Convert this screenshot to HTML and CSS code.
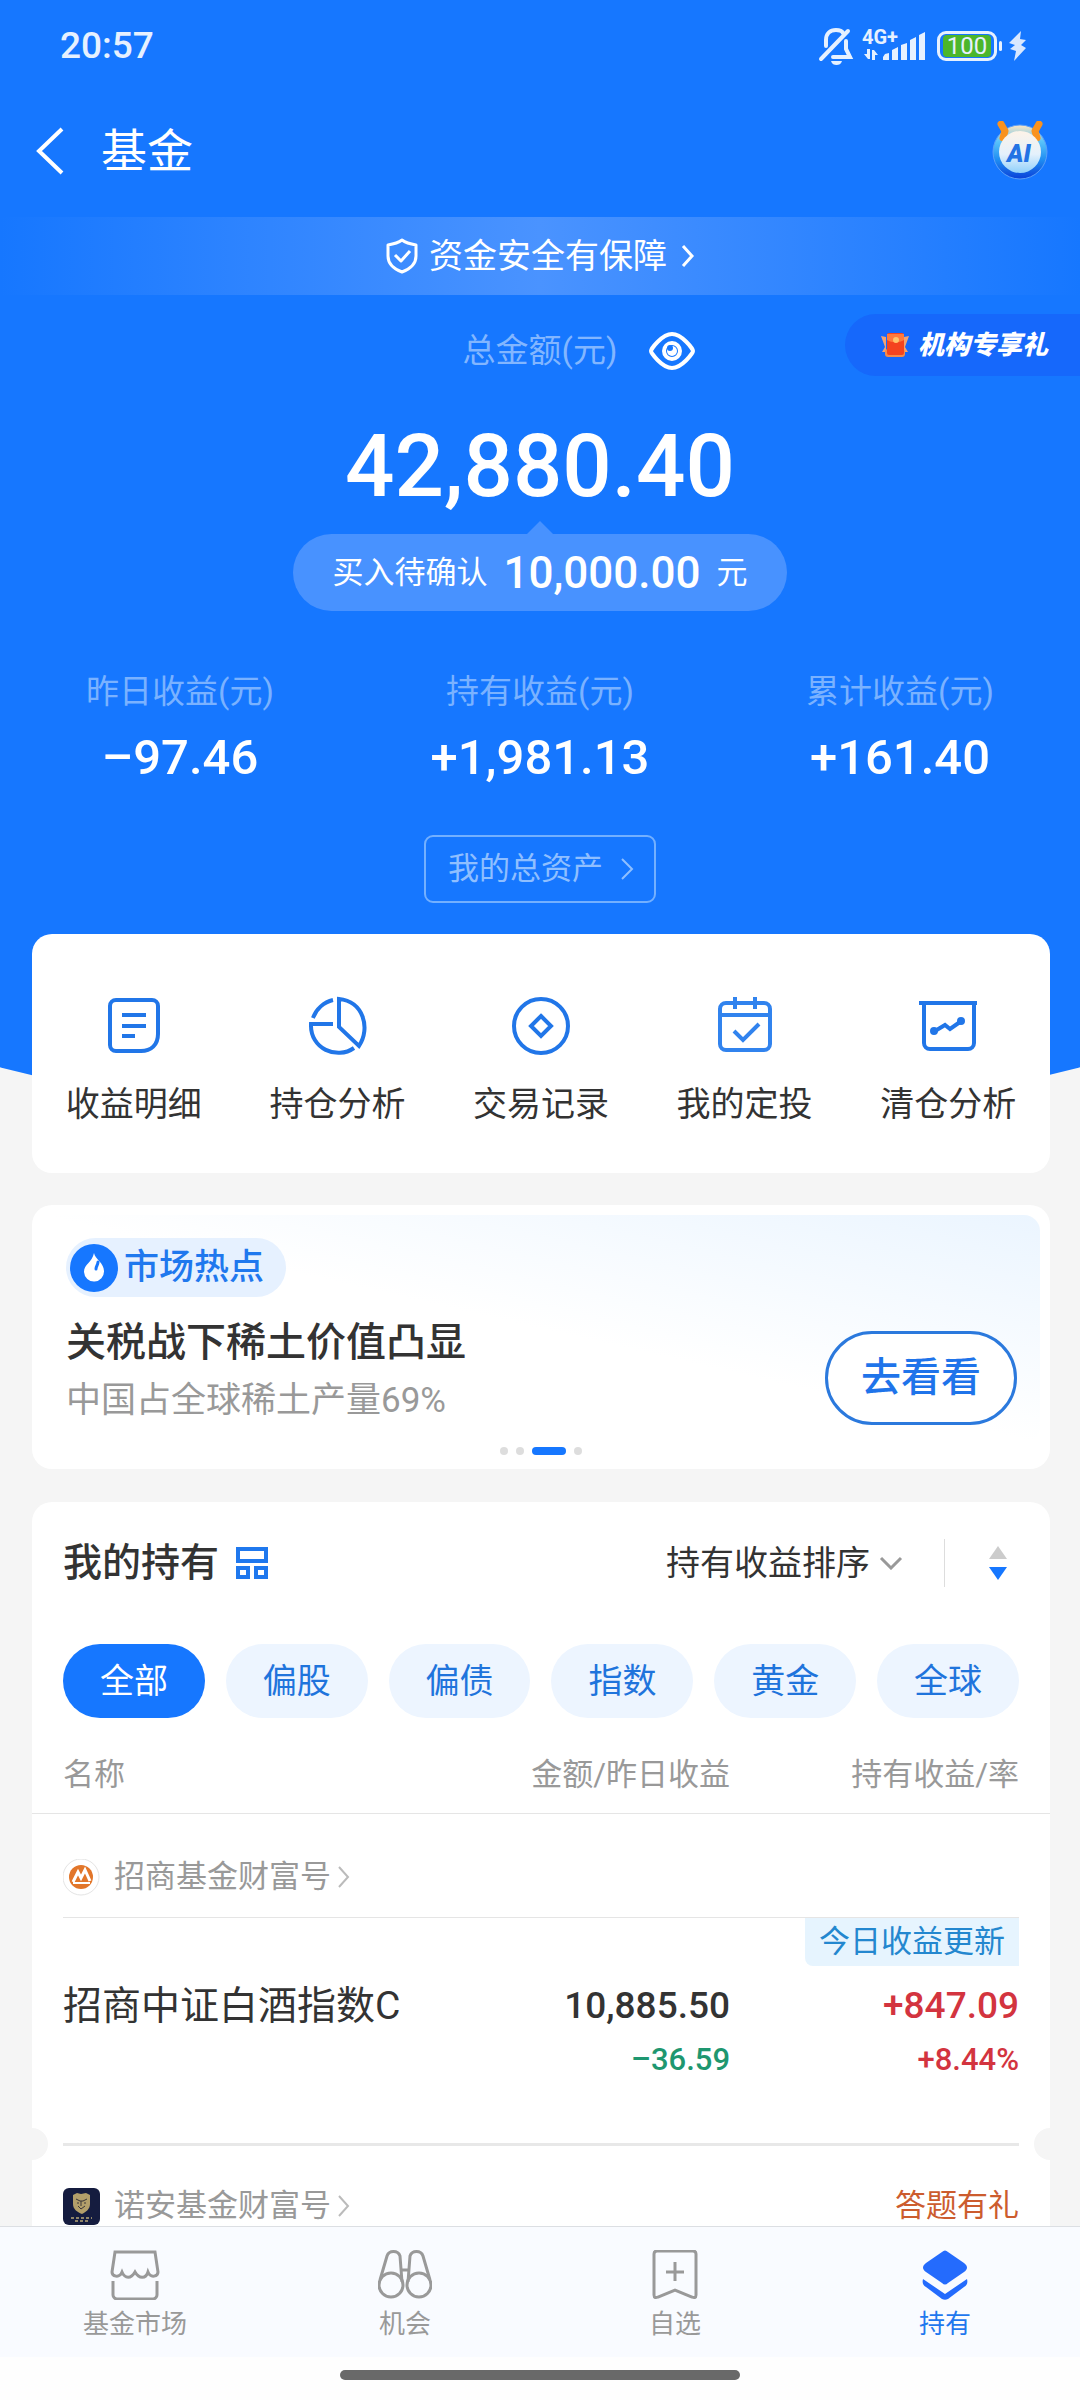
FILE: index.html
```html
<!DOCTYPE html>
<html lang="zh-CN">
<head>
<meta charset="utf-8">
<meta name="viewport" content="width=device-width, initial-scale=1">
<title>基金</title>
<link rel="stylesheet" href="styles.css">
</head>
<body>
<div class="app">
  <header class="hero">
    <div class="status">
      <span class="status-time">20:57</span>
      <div class="status-icons">
        <svg class="ic-bell" width="36" height="40" viewBox="0 0 36 40" fill="none" stroke="#e6f1ff" stroke-width="4" stroke-linecap="round">
          <path d="M8 20V14C8 8 12 4 18 4c3 0 6 1 7 3M28 15v8l4 8H15M3 33 30 5"/>
          <path d="M13 35h11c-1 3-3 4-5.500 4S14 38 13 35z" fill="#e6f1ff" stroke="none"/>
        </svg>
        <svg class="ic-signal" width="66" height="40" viewBox="0 0 66 40" fill="#e6f1ff">
          <text x="1" y="18" class="net">4G+</text>
          <path d="M24 28l4-1v7h-6v-3zM31 24l6-3v13h-6zM40 19l6-2v17h-6zM49 14l6-3v23h-6zM58 9l6-3v28h-6z"/>
          <path d="M9 23v10h-2l-4-5h3v-5zM11 34V24h2l4 5h-3v5z"/>
        </svg>
        <span class="battery"><span class="battery-level">100</span></span>
        <svg width="18" height="30" viewBox="0 0 18 30" fill="#d9e8ff"><path d="M12 0 0 12l6 2-5 4 6 2-2 10L17 17l-5-3 5-5-6-1z"/></svg>
      </div>
    </div>

    <div class="titlebar">
      <button class="plain back" aria-label="返回">
        <svg width="28" height="48" viewBox="0 0 28 48" fill="none" stroke="#fff" stroke-width="4"><path d="M26 2 3 24l23 22"/></svg>
      </button>
      <h1>基金</h1>
      <button class="plain assistant" aria-label="AI 助手">
        <svg width="56" height="60" viewBox="0 0 56 60">
          <defs>
            <linearGradient id="ring" x1="0" y1="0" x2="0" y2="1"><stop offset="0" stop-color="#ffe6c2"/><stop offset=".3" stop-color="#5ac4fa"/><stop offset=".65" stop-color="#1e8cf2"/><stop offset="1" stop-color="#0a40d8"/></linearGradient>
            <linearGradient id="face" x1="0" y1="0" x2="0" y2="1"><stop offset="0" stop-color="#fdf3e8"/><stop offset=".55" stop-color="#e4f1fc"/><stop offset="1" stop-color="#8fd0fb"/></linearGradient>
          </defs>
          <circle cx="28" cy="31" r="27" fill="url(#ring)" stroke="#5b9ff8" stroke-width="1"/>
          <path d="M9 3l4 7-2 7M47 3l-4 7 2 7" fill="none" stroke="#f9921e" stroke-width="7" stroke-linecap="round" stroke-linejoin="round"/>
          <circle cx="28" cy="31" r="21" fill="url(#face)"/>
          <text x="27" y="41" text-anchor="middle" class="ai">AI</text>
        </svg>
      </button>
    </div>

    <a class="safe" href="#safe">
      <svg width="34" height="36" viewBox="0 0 34 36" fill="none" stroke="#fff" stroke-width="3" stroke-linejoin="round"><path d="M17 2c4 3 8 4 14 5v11c0 8-6 13-14 16C9 31 3 26 3 18V7c6-1 10-2 14-5z"/><path d="M10 17l6 6 9-10"/></svg>
      <span>资金安全有保障</span>
      <svg width="14" height="24" viewBox="0 0 14 24" fill="none" stroke="#fff" stroke-width="3"><path d="M2 2l9 10-9 10"/></svg>
    </a>

    <div class="total-label">
      <span class="total-text">总金额(元)</span>
      <button class="plain eye" aria-label="隐藏金额">
        <svg width="48" height="38" viewBox="0 0 48 38" fill="none" stroke="#fff" stroke-width="4"><path d="M3 19C3 17 14 2 24 2s21 15 21 17-11 17-21 17S3 21 3 19z"/><circle cx="24" cy="19" r="8"/><circle cx="24" cy="19" r="5" fill="#fff" stroke="none"/><circle cx="22" cy="16" r="3" fill="#1677ff" stroke="none"/></svg>
      </button>
      <a class="gift" href="#gift">
        <svg width="32" height="26" viewBox="0 0 32 26"><path d="M2 4l5 1v15H3l3-5zM30 4l-5 1v15h4l-3-5z" fill="#f3a272"/><rect x="6" y="17" width="20" height="8" rx="3" fill="#f58a4b"/><rect x="8" y="1" width="17" height="22" rx="2" fill="#f4431f"/><path d="M8 2h17v6c-5 3-12 3-17 0z" fill="#ff7a3c"/><circle cx="17" cy="8" r="3" fill="#ffc36b"/></svg>
        <span>机构专享礼</span>
      </a>
    </div>

    <div class="amount">42,880.40</div>
    <a class="pending" href="#pending"><span>买入待确认</span><strong>10,000.00</strong><span>元</span></a>

    <dl class="stats">
      <div><dt>昨日收益(元)</dt><dd>–97.46</dd></div>
      <div><dt>持有收益(元)</dt><dd>+1,981.13</dd></div>
      <div><dt>累计收益(元)</dt><dd>+161.40</dd></div>
    </dl>

    <button class="assets">我的总资产
      <svg width="14" height="24" viewBox="0 0 14 24" fill="none" stroke="#8fbfff" stroke-width="2"><path d="M2 2l10 10L2 22"/></svg>
    </button>
  </header>

  <main>
    <nav class="card shortcuts" aria-label="快捷入口">
      <a href="#detail"><svg class="ic" viewBox="0 0 60 60"><path d="M12 4h36a6 6 0 0 1 6 6v28c0 11-7 17-17 17H12a6 6 0 0 1-6-6V10a6 6 0 0 1 6-6z"/><path d="M18 19h24M18 30h24M18 40h13"/></svg>收益明细</a>
      <a href="#position"><svg class="ic" viewBox="0 0 60 60"><path d="M32 3v28l20 19C64 32 56 5 32 3zM26 4C17 6 9 13 6 22M26 28H4c-1 25 26 36 43 24"/></svg>持仓分析</a>
      <a href="#trade"><svg class="ic" viewBox="0 0 60 60"><circle cx="30" cy="30" r="27"/><path d="M30 20l10 10-10 10-10-10z"/></svg>交易记录</a>
      <a href="#plan"><svg class="ic ic-light" viewBox="0 0 60 60"><rect x="5" y="7" width="50" height="47" rx="6"/><path d="M5 19h50M20 1v12M40 1v12M19 35l9 9 16-16"/></svg>我的定投</a>
      <a href="#cleared"><svg class="ic" viewBox="0 0 60 60"><path d="M1 7h58M6 7v40a6 6 0 0 0 6 6h38a6 6 0 0 0 6-6V7M17 35l10-6 5 4 10-7"/><circle cx="16" cy="35" r="2"/><circle cx="43" cy="25" r="2"/></svg>清仓分析</a>
    </nav>

    <section class="card hot">
      <div class="hot-inner">
        <div class="hot-text">
          <span class="hot-tag">
            <svg width="48" height="48" viewBox="0 0 48 48"><circle cx="24" cy="24" r="24" fill="#1677ff"/><path d="M24 9c1 6 10 10 10 18a10 10 0 0 1-20 1c0-8 8-9 10-19z" fill="#fff"/><path d="M28 18c0 3-2 4-2 7" fill="none" stroke="#1677ff" stroke-width="3" stroke-linecap="round"/></svg>
            市场热点
          </span>
          <h2>关税战下稀土价值凸显</h2>
          <p>中国占全球稀土产量69%</p>
        </div>
        <button class="go">去看看</button>
      </div>
      <div class="dots"><i></i><i></i><i class="on"></i><i></i></div>
    </section>

    <section class="card holdings">
      <div class="holdings-head">
        <h2>我的持有</h2>
        <button class="plain layout" aria-label="切换布局">
          <svg width="34" height="34" viewBox="0 0 34 34" fill="none" stroke="#1f78ee" stroke-width="4"><rect x="3" y="3" width="28" height="12"/><rect x="3" y="22" width="10" height="9"/><rect x="21" y="22" width="10" height="9"/></svg>
        </button>
        <label class="sort">
          <select aria-label="排序方式"><option>持有收益排序</option><option>昨日收益排序</option></select>
          <svg width="24" height="14" viewBox="0 0 24 14" fill="none" stroke="#999" stroke-width="3"><path d="M2 2l10 10L22 2"/></svg>
        </label>
        <button class="plain order" aria-label="切换升降序">
          <svg width="20" height="34" viewBox="0 0 20 34"><path d="M10 0l9 13H1z" fill="#ccc"/><path d="M10 34l9-13H1z" fill="#1677ff"/></svg>
        </button>
      </div>

      <div class="tabs">
        <button class="on">全部</button><button>偏股</button><button>偏债</button><button>指数</button><button>黄金</button><button>全球</button>
      </div>

      <table>
        <colgroup><col><col class="col-amount"><col class="col-profit"></colgroup>
        <thead><tr><th>名称</th><th>金额/昨日收益</th><th>持有收益/率</th></tr></thead>
        <tbody>
          <tr><td colspan="3"><div class="group lined">
            <svg width="37" height="37" viewBox="0 0 37 37"><circle cx="18" cy="18" r="18" fill="#fff" stroke="#e4e4e4"/><circle cx="18" cy="18" r="12" fill="#e2762a"/><path d="M10 23l5-10 3 6 4-8 5 11" fill="none" stroke="#fff" stroke-width="3"/><path d="M10 24h17" stroke="#fff" stroke-width="2"/></svg>
            <a href="#cmf">招商基金财富号</a>
            <svg width="14" height="24" viewBox="0 0 14 24" fill="none" stroke="#bbb" stroke-width="2"><path d="M2 2l9 10-9 10"/></svg>
          </div></td></tr>
          <tr class="fund">
            <td><span class="name">招商中证白酒指数C</span></td>
            <td><span class="value">10,885.50</span><span class="sub down">–36.59</span></td>
            <td><span class="update">今日收益更新</span><span class="value up">+847.09</span><span class="sub up">+8.44%</span></td>
          </tr>
          <tr><td colspan="3"><div class="divider"></div></td></tr>
          <tr><td colspan="3"><div class="group">
            <svg width="37" height="37" viewBox="0 0 37 37"><rect width="37" height="37" rx="6" fill="#151c3f"/><path d="M10 7l4-2 4 1 5-1 4 2v9c0 5-4 8-8 10-5-2-9-5-9-10z" fill="#b39f6a"/><path d="M13 11l4 2h3l4-2M15 18l3 3 4-3M18 13v5M14 15h2M21 15h2" fill="none" stroke="#3a3638" stroke-width="1"/><path d="M8 30h21M12 33h13" stroke="#8f8468" stroke-width="2" stroke-dasharray="3 2"/></svg>
            <a href="#nuoan">诺安基金财富号</a>
            <svg width="14" height="24" viewBox="0 0 14 24" fill="none" stroke="#bbb" stroke-width="2"><path d="M2 2l9 10-9 10"/></svg>
            <a class="quiz" href="#quiz">答题有礼</a>
          </div></td></tr>
        </tbody>
      </table>
    </section>
  </main>

  <footer class="bottom">
    <nav class="tabbar" aria-label="主导航">
      <a href="#market"><svg viewBox="0 0 50 50"><path d="M5 2h40l3 20c0 4-7 7-10 0-2 7-9 7-13 0-4 7-10 7-13 0-3 7-10 4-10 0zM3 31v14c0 2 2 4 4 4h36c2 0 4-2 4-4V31"/></svg>基金市场</a>
      <a href="#chance"><svg viewBox="0 0 54 50"><circle cx="13" cy="35" r="12"/><circle cx="41" cy="35" r="12"/><path d="M2 30 9 6c2-6 11-6 13 0l2 26M52 30 45 6c-2-6-11-6-13 0l-2 26M24 20h6"/></svg>机会</a>
      <a href="#watch"><svg viewBox="0 0 50 50"><path d="M7 1h36c2 0 3 1 3 3v41c0 3-2 3-4 2l-17-7-17 7c-2 1-4 1-4-2V4c0-2 1-3 3-3zM25 12v19M16 22h18"/></svg>自选</a>
      <a class="on" href="#hold" aria-current="page"><svg viewBox="0 0 50 50"><path d="M22 2c2-2 4-2 6 0l16 11c4 3 4 6 0 9L28 33c-2 2-4 2-6 0L6 22c-4-3-4-6 0-9zM3 29l22 15 22-15c1 4 0 6-3 8L28 49c-2 1-4 1-6 0L6 37c-3-2-4-4-3-8z"/></svg>持有</a>
    </nav>
    <div class="home"><span></span></div>
  </footer>
</div>
</body>
</html>
```
FILE: styles.css
```css
* { box-sizing: border-box; }
body {
  margin: 0;
  background: #f5f5f5;
  color: #333;
  font-family: Roboto, "Noto Sans CJK SC", sans-serif;
  font-size: 31px;
  line-height: 44px;
}
h1, h2, p, dl, dd { margin: 0; font-weight: 400; }
a { color: inherit; text-decoration: none; }
button, select { font: inherit; color: inherit; border: 0; padding: 0; background: none; }
svg { display: block; flex: none; }
.plain { display: block; flex: none; }
.app { display: flex; flex-direction: column; min-height: 100vh; }
main { padding: 0 30px 0 32px; }

/* blue header with a curved lower edge that runs on behind the first card */
.hero {
  display: flex;
  flex-direction: column;
  padding-bottom: 231px;
  background: #1677ff;
  color: #fff;
  clip-path: ellipse(148% 100% at 50% 0);
}
.status { display: flex; align-items: center; justify-content: space-between; height: 92px; padding: 0 53px 0 60px; color: #e6f1ff; }
.status-time { font-size: 37px; font-weight: 500; }
.status-icons { display: flex; align-items: center; gap: 7px; }
.net { font-size: 20px; font-weight: 700; }
.battery { position: relative; margin: 0 5px 0 3px; padding: 1px 3px; border: 3px solid #e6f1ff; border-radius: 9px; }
.battery::after { content: ""; position: absolute; right: -8px; top: 7px; width: 3px; height: 10px; border-radius: 2px; background: #e6f1ff; }
.battery-level { display: block; width: 48px; border-radius: 4px; background: #4cb62c; font-size: 24px; line-height: 22px; text-align: center; }

.titlebar { display: flex; align-items: center; height: 118px; margin-bottom: 7px; padding: 0 32px 0 36px; }
.titlebar h1 { flex: 1; padding-left: 37px; font-size: 46px; line-height: 60px; }
.ai { font-size: 25px; font-weight: 900; font-style: italic; fill: #2373e4; }

.safe {
  display: flex;
  align-items: center;
  justify-content: center;
  gap: 10px;
  height: 78px;
  font-size: 34px;
  background: linear-gradient(90deg, #1677ff, #4a93ff 50%, #1677ff);
}
.safe span { padding-right: 4px; }

.total-label { position: relative; display: grid; grid-template-columns: 1fr auto 1fr; align-items: center; margin-top: 32px; line-height: 48px; }
.total-text { grid-column: 2; font-size: 33px; color: #82b6ff; }
.eye { padding-left: 31px; justify-self: start; }
.gift {
  position: absolute;
  right: 0;
  top: -13px;
  display: flex;
  align-items: center;
  gap: 7px;
  height: 62px;
  padding: 0 32px 0 34px;
  border-radius: 31px 0 0 31px;
  background: #1668fb;
  font-size: 26px;
  font-weight: 900;
  font-style: italic;
}
.amount { margin-top: 39px; font-size: 87px; font-weight: 500; line-height: 104px; text-align: center; }
.pending {
  position: relative;
  display: flex;
  align-items: center;
  align-self: center;
  gap: 16px;
  height: 77px;
  margin-top: 16px;
  padding: 0 39px;
  border-radius: 39px;
  background: #4892ff;
}
.pending::before { content: ""; position: absolute; left: 50%; top: -13px; margin-left: -13px; border: 13px solid transparent; border-top: 0; border-bottom-color: #4892ff; }
.pending strong { font-size: 44px; font-weight: 500; }

.stats { display: grid; grid-template-columns: repeat(3, 1fr); margin-top: 59px; text-align: center; }
.stats dt { font-size: 33px; color: #7ab2ff; }
.stats dd { margin-top: 14px; font-size: 49px; font-weight: 500; line-height: 60px; }
.assets {
  display: flex;
  align-items: center;
  align-self: center;
  gap: 17px;
  height: 68px;
  margin-top: 47px;
  padding: 0 20px 0 22px;
  border: 2px solid #73b0ff;
  border-radius: 9px;
  color: #8fbfff;
}

.card { position: relative; border-radius: 20px; background: #fff; }
.shortcuts { display: grid; grid-template-columns: repeat(5, 1fr); margin-top: -200px; padding: 62px 0 47px; font-size: 34px; }
.shortcuts a { display: flex; flex-direction: column; align-items: center; gap: 26px; }
.ic { width: 60px; height: 60px; fill: none; stroke: #2176e8; stroke-width: 4; }
.ic-light { stroke: #3183ee; }

.hot { margin-top: 32px; padding: 10px 10px 14px; }
.hot-inner {
  display: flex;
  align-items: flex-end;
  justify-content: space-between;
  padding: 23px 23px 18px 24px;
  border-radius: 16px;
  background: linear-gradient(to top right, #fff 50%, #ebf5ff);
}
.hot-tag { display: flex; align-items: center; gap: 6px; width: fit-content; height: 59px; padding: 0 22px 0 4px; border-radius: 30px; background: #e6f1ff; color: #1f78ee; font-size: 35px; font-weight: 500; }
.hot h2 { margin-top: 16px; font-size: 40px; font-weight: 500; line-height: 60px; }
.hot p { margin-top: 4px; font-size: 35px; line-height: 48px; color: #999; }
.go { width: 192px; height: 94px; border: 3px solid #2b79dd; border-radius: 47px; background: #fff; color: #1f74ea; font-size: 40px; font-weight: 500; }
.dots { display: flex; justify-content: center; gap: 8px; height: 8px; margin-top: 4px; }
.dots i { width: 8px; border-radius: 4px; background: #ddd; }
.dots .on { width: 34px; background: #1677ff; }

.holdings { margin-top: 33px; border-radius: 20px 20px 0 0; }
.holdings-head { display: flex; align-items: center; padding: 37px 42px 0 31px; }
.holdings-head h2 { font-size: 39px; font-weight: 500; line-height: 48px; }
.layout { margin-left: 16px; }
.sort { display: flex; align-items: center; gap: 9px; margin-left: auto; font-size: 34px; }
.sort select { appearance: none; line-height: 48px; }
.order { margin-left: 41px; padding: 7px 0 7px 43px; border-left: 1px solid #ddd; }
.tabs { display: grid; grid-template-columns: repeat(6, 1fr); gap: 21px; margin-top: 57px; padding: 0 31px; }
.tabs button { height: 74px; border-radius: 37px; background: #edf5ff; color: #1f74dc; font-size: 34px; }
.tabs .on { background: #1677ff; color: #fff; }

table { width: 100%; border-collapse: collapse; table-layout: fixed; }
.col-amount { width: 280px; }
.col-profit { width: 320px; }
th, td { padding: 0; text-align: right; vertical-align: top; }
th { padding: 35px 0 16px; border-bottom: 1px solid #e5e5e5; font-weight: 400; color: #999; }
th:first-child, .fund td:first-child { padding-left: 31px; text-align: left; }
th:last-child, .fund td:last-child { padding-right: 31px; }
.group { display: flex; align-items: center; gap: 14px; margin: 0 31px; padding-top: 40px; line-height: 40px; color: #999; }
.group.lined { padding-top: 43px; padding-bottom: 20px; border-bottom: 1px solid #e5e5e5; }
.group a + svg { margin-left: -8px; }
.quiz { margin-left: auto; color: #cc5c2e; }
.fund td { padding-top: 60px; padding-bottom: 61px; }
.fund td:last-child { padding-top: 0; }
.fund span { display: block; }
.fund .update { width: fit-content; margin: 0 0 12px auto; padding: 0 14px; border-radius: 0 0 0 8px; background: #e6f4fe; color: #2387cf; line-height: 48px; }
.name { font-size: 39px; line-height: 56px; }
.value { font-size: 37px; font-weight: 500; line-height: 56px; }
.sub { margin-top: 4px; font-size: 31px; font-weight: 500; }
.up { color: #d3343f; }
.down { color: #1e9770; }
.divider { position: relative; margin: 0 31px; border-top: 3px solid #e8e8e8; }
.divider::before, .divider::after { content: ""; position: absolute; top: -18px; width: 16px; height: 32px; background: #f5f5f5; }
.divider::before { left: -31px; border-radius: 0 16px 16px 0; }
.divider::after { right: -31px; border-radius: 16px 0 0 16px; }

.bottom { position: sticky; bottom: 0; margin-top: auto; }
.tabbar { display: grid; grid-template-columns: repeat(4, 1fr); padding: 23px 0 15px; border-top: 1px solid #dcdfe3; background: #f9fbff; color: #999; font-size: 26px; line-height: 36px; }
.tabbar a { display: flex; flex-direction: column; align-items: center; gap: 6px; }
.tabbar svg { height: 50px; fill: none; stroke: #999; stroke-width: 3; }
.tabbar .on { color: #1f78ee; }
.tabbar .on svg { fill: #246bfd; stroke: none; }
.home { display: flex; justify-content: center; height: 43px; padding-top: 13px; background: #fefefe; }
.home span { width: 37%; height: 10px; border-radius: 5px; background: #696969; }
```
